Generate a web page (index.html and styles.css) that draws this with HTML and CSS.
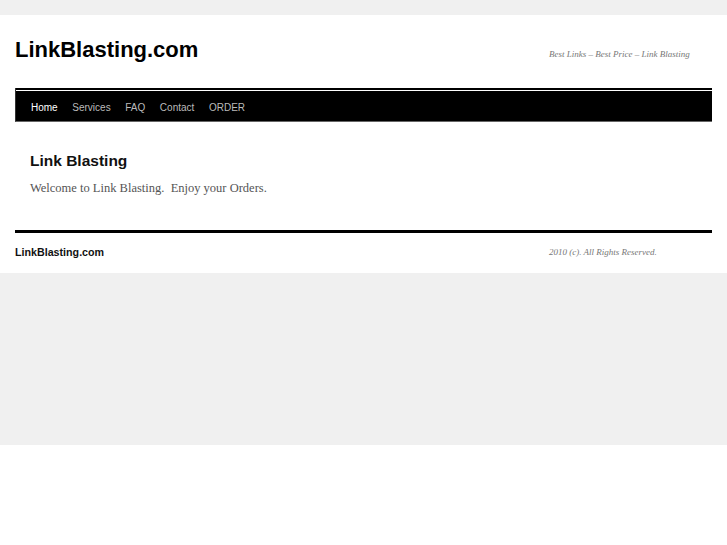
FILE: index.html
```html
<!DOCTYPE html>
<html>
<head>
<meta charset="utf-8">
<title>LinkBlasting.com</title>
<link rel="stylesheet" href="styles.css">
</head>
<body>
<div class="page">
  <div class="wrapper">
    <header class="header">
      <h1 class="site-title">LinkBlasting.com</h1>
      <div class="tagline">Best Links – Best Price – Link Blasting</div>
    </header>
    <nav class="nav">
      <a class="nav-item current" href="#">Home</a>
      <a class="nav-item" href="#">Services</a>
      <a class="nav-item" href="#">FAQ</a>
      <a class="nav-item" href="#">Contact</a>
      <a class="nav-item" href="#">ORDER</a>
    </nav>
    <main class="content">
      <h2 class="entry-title">Link Blasting</h2>
      <p class="entry-text">Welcome to Link Blasting.&nbsp; Enjoy your Orders.</p>
    </main>
    <footer class="footer">
      <div class="footer-title">LinkBlasting.com</div>
      <div class="copyright">2010 (c). All Rights Reserved.</div>
    </footer>
  </div>
</div>
</body>
</html>
```
FILE: styles.css
```css
html, body {
  margin: 0;
  padding: 0;
  background: #fff;
}
.page {
  background: #f0f0f0;
  height: 445px;
  padding-top: 15px;
  box-sizing: border-box;
}
.wrapper {
  background: #fff;
  padding: 0 15px;
  height: 258px;
  box-sizing: border-box;
}
.header {
  display: flex;
  justify-content: space-between;
  align-items: flex-start;
  height: 73px;
  box-sizing: border-box;
  padding-top: 22px;
}
.site-title {
  margin: 0;
  font-family: "Liberation Sans", Arial, sans-serif;
  font-weight: bold;
  font-size: 22px;
  line-height: 26px;
  color: #000;
}
.tagline {
  font-family: "Liberation Serif", serif;
  font-style: italic;
  font-size: 9px;
  color: #777;
  width: 163px;
  padding-top: 12px;
}
.nav {
  display: flex;
  gap: 14.6px;
  height: 34px;
  background: linear-gradient(#000 0 2px, #fff 2px 3px, #000 3px);
  padding: 6px 0 0 15px;
  box-sizing: border-box;
  border-bottom: 1px solid #666;
  border-left: 1px solid #333;
}
.nav-item {
  font-family: "Liberation Sans", Arial, sans-serif;
  font-size: 10px;
  line-height: 27px;
  color: #bbb;
  text-decoration: none;
}
.nav-item.current {
  color: #fff;
}
.content {
  padding: 30px 15px 0;
  height: 108px;
  box-sizing: border-box;
}
.entry-title {
  margin: 0;
  font-family: "Liberation Sans", Arial, sans-serif;
  font-weight: bold;
  font-size: 15.5px;
  line-height: 18px;
  color: #111;
}
.entry-text {
  margin: 10px 0 0;
  font-family: "Liberation Serif", serif;
  font-size: 12.5px;
  line-height: 16px;
  color: #555;
}
.footer {
  border-top: 3px solid #000;
  display: flex;
  justify-content: space-between;
  padding-top: 13px;
}
.footer-title {
  font-family: "Liberation Sans", Arial, sans-serif;
  font-weight: bold;
  font-size: 10.7px;
  color: #111;
}
.copyright {
  font-family: "Liberation Serif", serif;
  font-style: italic;
  font-size: 9px;
  color: #777;
  width: 163px;
  padding-top: 1px;
}
```
